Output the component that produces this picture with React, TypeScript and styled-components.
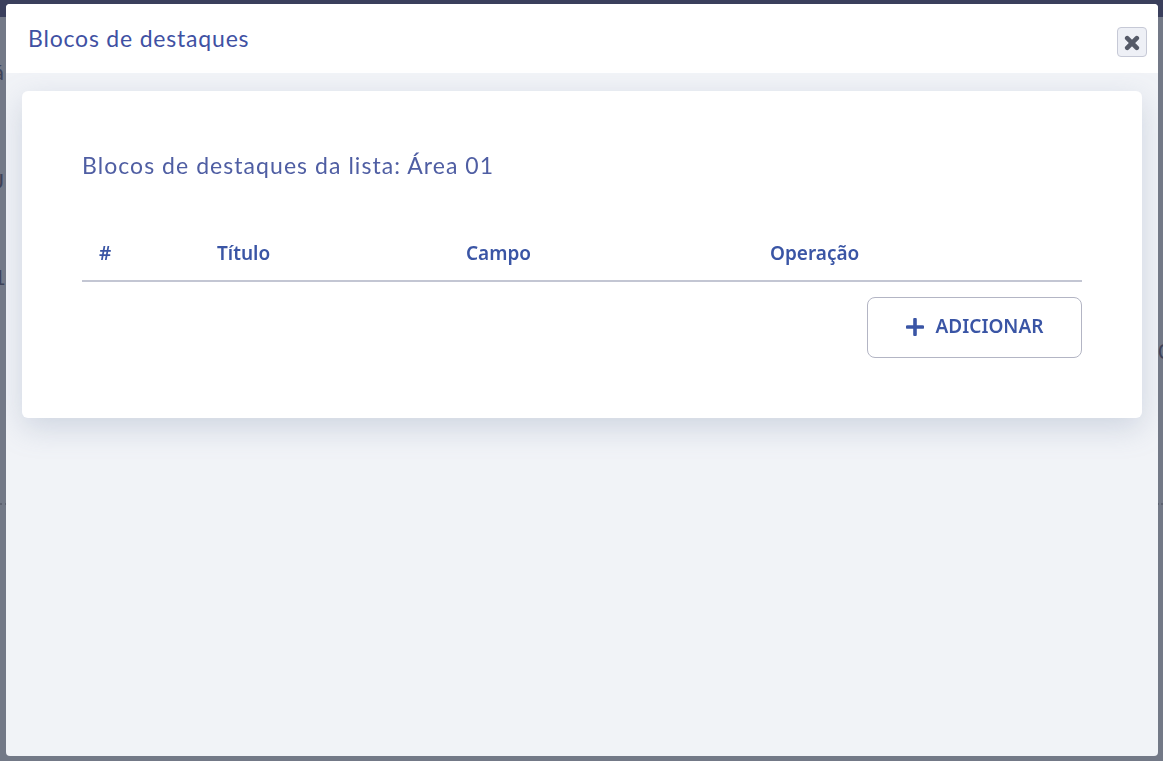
import React from 'react';
import styled, { createGlobalStyle } from 'styled-components';

const GlobalStyle = createGlobalStyle`
  html, body {
    margin: 0;
    padding: 0;
    height: 100%;
    overflow: hidden;
    background: #737987;
  }
  * {
    box-sizing: border-box;
  }
`;

const PageBehind = styled.div`
  height: 761px;
  display: flex;
  flex-direction: column;
  background: #737987;
  color: #3d4258;
  font-family: 'Lato', sans-serif;
`;

const TopBar = styled.div`
  height: 17px;
  flex: none;
  background: #3a3f5c;
`;

const BehindRow = styled.div<{ $height: number; $shift: number }>`
  height: ${(p) => p.$height}px;
  flex: none;
  display: flex;
  justify-content: space-between;
  align-items: flex-end;
  font-size: 22px;
  line-height: 22px;
  margin: 0 -8px 0 ${(p) => p.$shift}px;
`;

const BehindRule = styled.div`
  margin-top: 141px;
  border-top: 2px dotted #5d6270;
`;

const Overlay = styled.div`
  position: fixed;
  inset: 0;
  padding: 4px 5px 5px 6px;
`;

const Modal = styled.div`
  height: 100%;
  display: flex;
  flex-direction: column;
  background: #f1f3f7;
  border-radius: 4px;
  overflow: hidden;
`;

const ModalHeader = styled.header`
  height: 69px;
  flex: none;
  display: flex;
  justify-content: space-between;
  padding: 23px 11px 0 22px;
  background: #ffffff;
`;

const ModalTitle = styled.h1`
  margin: 0;
  font-family: 'Lato', sans-serif;
  font-weight: 400;
  font-size: 23px;
  line-height: 22px;
  letter-spacing: 0.8px;
  color: #3f51a3;
`;

const CloseButton = styled.button`
  width: 30px;
  height: 30px;
  padding: 0;
  display: flex;
  align-items: center;
  justify-content: center;
  background: #eef0f6;
  border: 1px solid #c6c9d6;
  border-radius: 4px;
  color: #555a68;
`;

const ModalBody = styled.div`
  flex: 1;
  padding: 18px 16px 0 16px;
`;

const Card = styled.section`
  height: 327px;
  padding: 61px 60px 0;
  background: #ffffff;
  border-radius: 6px;
  box-shadow: 0 10px 30px rgba(120, 135, 170, 0.28);
`;

const CardTitle = styled.h2`
  margin: 0;
  font-family: 'Lato', sans-serif;
  font-weight: 400;
  font-size: 23px;
  line-height: 26px;
  letter-spacing: 1.05px;
  color: #4f5ea3;
`;

const Table = styled.div`
  margin-top: 62px;
`;

const HeadRow = styled.div`
  height: 42px;
  display: grid;
  grid-template-columns: 118px 249px 304px 1fr;
  padding: 1px 0 0 17px;
  border-bottom: 2px solid #c3c6d3;
`;

const HeadCell = styled.div`
  font-family: 'Noto Sans', sans-serif;
  font-weight: 600;
  font-size: 19px;
  line-height: 24px;
  color: #3a55a5;
`;

const Footer = styled.div`
  display: flex;
  justify-content: flex-end;
  margin-top: 15px;
`;

const AddButton = styled.button`
  width: 215px;
  height: 61px;
  padding: 0 0 3px;
  display: flex;
  align-items: center;
  justify-content: center;
  gap: 12px;
  background: #ffffff;
  border: 1px solid #b3b5c4;
  border-radius: 8px;
  font-family: 'Noto Sans', sans-serif;
  font-weight: 600;
  font-size: 19px;
  color: #3a55a5;
`;

const columns = ['#', 'Título', 'Campo', 'Operação'];

const CloseIcon = () => (
  <svg width="16" height="16" viewBox="0 0 16 16" style={{ marginTop: 2 }}>
    <path d="M3.2 3.2 L12.8 12.8 M12.8 3.2 L3.2 12.8" stroke="currentColor" strokeWidth="4.6" strokeLinecap="round" />
  </svg>
);

const PlusIcon = () => (
  <svg width="18" height="18" viewBox="0 0 18 18" style={{ marginTop: 2 }}>
    <path d="M9 1.5 V16.5 M1.5 9 H16.5" stroke="currentColor" strokeWidth="3.6" strokeLinecap="round" />
  </svg>
);

const App = () => {
  return (
    <>
      <GlobalStyle />
      <PageBehind>
        <TopBar />
        <BehindRow $height={66} $shift={-7}>á</BehindRow>
        <BehindRow $height={109} $shift={-12}>U</BehindRow>
        <BehindRow $height={96} $shift={-7}>1</BehindRow>
        <BehindRow $height={74} $shift={0}>
          <span />
          <span>.0</span>
        </BehindRow>
        <BehindRule />
      </PageBehind>
      <Overlay>
        <Modal>
          <ModalHeader>
            <ModalTitle>Blocos de destaques</ModalTitle>
            <CloseButton aria-label="Fechar">
              <CloseIcon />
            </CloseButton>
          </ModalHeader>
          <ModalBody>
            <Card>
              <CardTitle>Blocos de destaques da lista: Área 01</CardTitle>
              <Table>
                <HeadRow>
                  {columns.map((col) => (
                    <HeadCell key={col}>{col}</HeadCell>
                  ))}
                </HeadRow>
                <Footer>
                  <AddButton>
                    <PlusIcon />
                    ADICIONAR
                  </AddButton>
                </Footer>
              </Table>
            </Card>
          </ModalBody>
        </Modal>
      </Overlay>
    </>
  );
};

export default App;
